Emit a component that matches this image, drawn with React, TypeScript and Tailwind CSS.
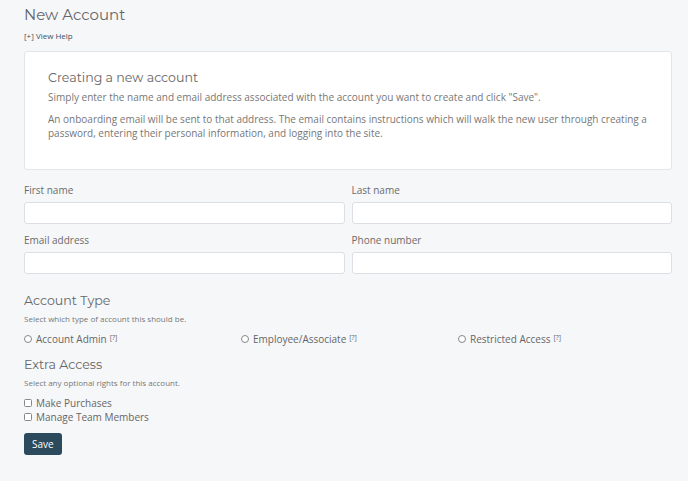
import React from "react";

const heading = "font-['Montserrat','Open_Sans',sans-serif]";

function Field({ label }: { label: string }) {
  return (
    <div className="flex flex-col">
      <label className="text-[10px] leading-[14px] text-[#6b6b6b] mb-[5px]">{label}</label>
      <input className="h-[22px] bg-white border border-[#dcdfe3] rounded-[3px] px-2 text-[10px] outline-none" />
    </div>
  );
}

function Radio({ label }: { label: string }) {
  return (
    <label className="flex items-center text-[10px] leading-[14px] text-[#666]">
      <span className="w-[8px] h-[8px] rounded-full border border-[#888] mr-[4px] bg-white" />
      <span>{label}</span>
      <sup className="text-[7px] ml-[3px] relative -top-[1px]">[?]</sup>
    </label>
  );
}

function Check({ label }: { label: string }) {
  return (
    <label className="flex items-center text-[10px] leading-[14px] text-[#666]">
      <span className="w-[8px] h-[8px] rounded-[1.5px] border border-[#888] mr-[4px] bg-white" />
      <span>{label}</span>
    </label>
  );
}

export default function App() {
  return (
    <div className="min-h-[481px] bg-[#f6f7f9] pl-[24px] pr-[16px] pt-[5px] font-['Open_Sans',sans-serif] text-[#666]">
      <h1 className={`${heading} text-[15px] leading-[20px] text-[#666]`}>New Account</h1>
      <a className="block mt-[5px] text-[8px] leading-[12px] text-[#3c5262]">[+] View Help</a>

      {/* info box */}
      <div className="mt-[9px] bg-white border border-[#e3e5e8] rounded-[3px] h-[119px] px-[23px] pt-[17px]">
        <h2 className={`${heading} text-[12.6px] leading-[17px] text-[#666]`}>Creating a new account</h2>
        <p className="mt-[4px] text-[10px] leading-[14px] text-[#777]">
          Simply enter the name and email address associated with the account you want to create and click "Save".
        </p>
        <p className="mt-[8px] text-[10px] leading-[14px] text-[#777]">
          An onboarding email will be sent to that address. The email contains instructions which will walk the new user through creating a password, entering their personal information, and logging into the site.
        </p>
      </div>

      {/* fields */}
      <div className="mt-[13px] grid grid-cols-2 gap-x-[7px] gap-y-[9px]">
        <Field label="First name" />
        <Field label="Last name" />
        <Field label="Email address" />
        <Field label="Phone number" />
      </div>

      <h3 className={`${heading} mt-[18px] text-[12.6px] leading-[17px] text-[#666]`}>Account Type</h3>
      <p className="mt-[4px] text-[8px] leading-[12px] text-[#777]">Select which type of account this should be.</p>
      <div className="mt-[7px] grid grid-cols-3 gap-x-[3px]">
        <Radio label="Account Admin" />
        <Radio label="Employee/Associate" />
        <Radio label="Restricted Access" />
      </div>

      <h3 className={`${heading} mt-[10px] text-[12.6px] leading-[17px] text-[#666]`}>Extra Access</h3>
      <p className="mt-[4px] text-[8px] leading-[12px] text-[#777]">Select any optional rights for this account.</p>
      <div className="mt-[7px] flex flex-col">
        <Check label="Make Purchases" />
        <Check label="Manage Team Members" />
      </div>

      <button className="mt-[9px] h-[22px] px-[8px] bg-[#2b4a5b] text-white text-[10px] rounded-[3px]">Save</button>
    </div>
  );
}
